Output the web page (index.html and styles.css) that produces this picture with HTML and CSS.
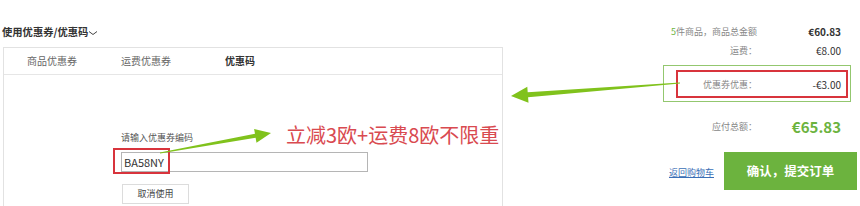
FILE: index.html
```html
<!DOCTYPE html>
<html lang="zh">
<head>
<meta charset="utf-8">
<link rel="stylesheet" href="styles.css">
</head>
<body>
<div class="page">
  <div class="left">
    <div class="title">使用优惠券/优惠码<svg class="chev" width="10" height="8" viewBox="0 0 10 8"><path d="M1 2.5 L5 5.5 L9 2.5" fill="none" stroke="#444" stroke-width="1"/></svg></div>
    <div class="box">
      <div class="tabs">
        <div class="tab">商品优惠券</div>
        <div class="tab">运费优惠券</div>
        <div class="tab active">优惠码</div>
      </div>
      <div class="box-body">
        <div class="label">请输入优惠券编码</div>
        <div class="input-wrap">
          <div class="input">BA58NY</div>
          <div class="mark-red"></div>
        </div>
        <div class="cancel">取消使用</div>
      </div>
    </div>
  </div>
  <div class="right">
    <div class="row"><span class="lbl"><span class="green">5</span>件商品，商品总金额</span><span class="val bold">€60.83</span></div>
    <div class="row"><span class="lbl">运费：</span><span class="val">€8.00</span></div>
    <div class="gbox">
      <div class="rbox"><span class="lbl">优惠券优惠：</span><span class="val">-€3.00</span></div>
    </div>
    <div class="row total"><span class="lbl">应付总额：</span><span class="val big">€65.83</span></div>
    <div class="actions">
      <a class="back">返回购物车</a>
      <div class="submit">确认，提交订单</div>
    </div>
  </div>
</div>
<div class="note">立减3欧+运费8欧不限重</div>
<svg class="arrows" width="860" height="206" viewBox="0 0 860 206">
  <polygon fill="#80c21c" points="159.9,152.5 255,133.8 254.1,128.9 271,133 256.5,142.7 255.6,137.8 160.1,153.5"/>
  <polygon fill="#80c21c" points="511,96 527.3,86.7 527.7,92.2 680,82.5 680,83.5 528.1,97.2 528.5,102.7"/>
</svg>
</body>
</html>
```

FILE: styles.css
```css
html, body {
  margin: 0;
  padding: 0;
  width: 860px;
  height: 206px;
  overflow: hidden;
  background: #fff;
}
body {
  position: relative;
  font-family: "Noto Sans CJK SC", "Noto Sans", sans-serif;
  color: #333;
}
.page {
  display: flex;
  width: 860px;
  height: 206px;
}
.left {
  width: 505px;
  padding-top: 25px;
  box-sizing: border-box;
}
.title {
  padding-left: 2px;
  font-size: 10.3px;
  line-height: 14px;
  font-weight: bold;
  color: #333;
  display: flex;
  align-items: center;
}
.chev {
  margin-left: 0;
  margin-top: 1px;
}
.box {
  margin-top: 8px;
  margin-left: 3px;
  width: 500px;
  height: 159px;
  box-sizing: border-box;
  border: 1px solid #e2e2e2;
  border-bottom: none;
}
.tabs {
  display: flex;
  height: 26px;
  border-bottom: 1px solid #e6e6e6;
  padding-left: 1px;
}
.tab {
  width: 94px;
  text-align: center;
  font-size: 10px;
  line-height: 26px;
  color: #666;
}
.tab.active {
  font-weight: bold;
  color: #333;
}
.box-body {
  padding-top: 57px;
  padding-left: 117px;
}
.label {
  font-size: 9px;
  line-height: 12px;
  color: #555;
}
.input-wrap {
  position: relative;
  margin-top: 8px;
  width: 247px;
}
.input {
  height: 20px;
  box-sizing: border-box;
  border: 1px solid #b5b5b5;
  font-size: 11px;
  line-height: 18px;
  padding-left: 2px;
  color: #333;
}
.mark-red {
  position: absolute;
  left: -8px;
  top: -4px;
  width: 57px;
  height: 26px;
  box-sizing: border-box;
  border: 2px solid #d8343c;
}
.cancel {
  margin-top: 12px;
  margin-left: 1px;
  width: 67px;
  height: 20px;
  box-sizing: border-box;
  border: 1px solid #dcdcdc;
  font-size: 9px;
  line-height: 18px;
  text-align: center;
  color: #444;
}
.right {
  margin-left: auto;
  width: 197px;
  padding-top: 22px;
}
.row {
  display: grid;
  grid-template-columns: 1fr 84px;
  margin-right: 9px;
  padding-right: 10px;
  height: 19px;
  align-items: center;
}
.lbl {
  text-align: right;
  font-size: 9px;
  color: #888;
}
.val {
  text-align: right;
  font-size: 10px;
  color: #333;
}
.bold { font-weight: bold; }
.green { color: #6cb33e; }
.gbox {
  margin-top: 5px;
  margin-right: 9px;
  border: 1px solid #93c76f;
  padding: 4px 2px 3px 12px;
}
.rbox {
  display: grid;
  grid-template-columns: 1fr 84px;
  height: 28px;
  box-sizing: border-box;
  border: 2px solid #d8343c;
  padding-right: 5px;
  align-items: center;
}
.row.total {
  margin-top: 12px;
  height: 24px;
}
.big {
  font-size: 15px;
  font-weight: bold;
  color: #6cb33e;
}
.actions {
  margin-top: 14px;
  margin-right: 3px;
  display: flex;
  justify-content: flex-end;
  align-items: center;
}
.back {
  font-size: 9px;
  color: #3b6fb6;
  text-decoration: underline;
  margin-right: 10px;
  margin-top: 2px;
}
.submit {
  width: 133px;
  height: 38px;
  background: #6cb33e;
  color: #fff;
  font-size: 12.5px;
  font-weight: bold;
  line-height: 38px;
  text-align: center;
}
.note {
  position: absolute;
  left: 286px;
  top: 123px;
  font-size: 20px;
  line-height: 24px;
  color: #d94a50;
  white-space: nowrap;
}
.arrows {
  position: absolute;
  left: 0;
  top: 0;
  pointer-events: none;
}
```
